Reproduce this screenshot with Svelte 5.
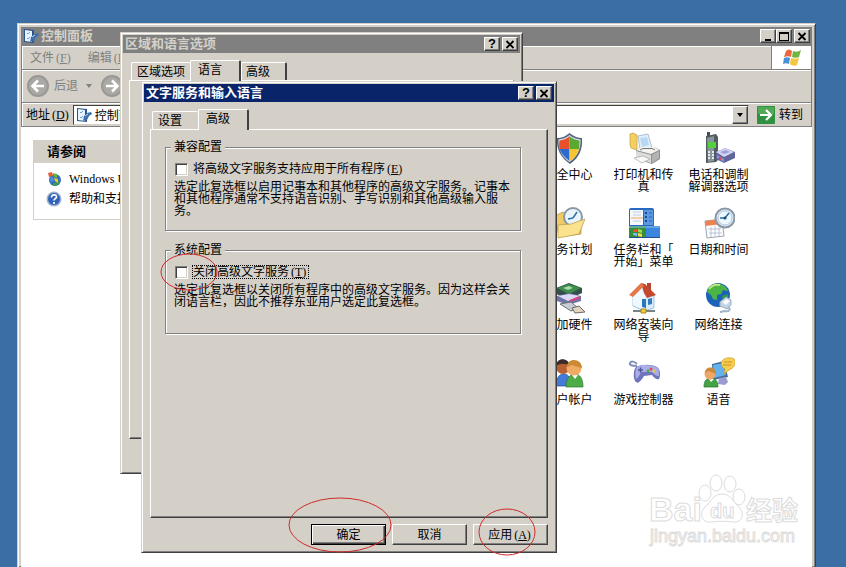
<script>
  const applets = [
    { icon: 'shield', label: '安全中心' },
    { icon: 'printer', label: '打印机和传真' },
    { icon: 'phone', label: '电话和调制解调器选项' },
    { icon: 'tasks', label: '任务计划' },
    // the opening bracket stays on the first line, so the break is explicit
    { icon: 'taskbar', label: '任务栏和「\n开始」菜单' },
    { icon: 'date', label: '日期和时间' },
    { icon: 'hardware', label: '添加硬件' },
    { icon: 'house', label: '网络安装向导' },
    { icon: 'globe', label: '网络连接' },
    { icon: 'users', label: '用户帐户' },
    { icon: 'gamepad', label: '游戏控制器' },
    { icon: 'speech', label: '语音' }
  ];

  let address = $state('控制面板');
  let allPrograms = $state(false);
  let turnOff = $state(false);
</script>

{#snippet panelIcon()}
  <svg class="ico16" viewBox="0 0 16 16" aria-hidden="true">
    <path d="M1 1l10 1v13L1 14z" fill="#2a5690" />
    <path d="M2 2l7 1v11l-7-1z" fill="#e8f3fc" />
    <path d="M4 5l1 1 2-2M4 10l1 1 2-2" stroke="#6fa3d8" fill="none" />
    <path d="M8 9l3-3 4-1 1 2-3 2-2 4-4 1z" fill="#3c6fae" />
    <path d="M9 9l3-2" stroke="#b7d4ee" />
  </svg>
{/snippet}

{#snippet closeGlyph()}
  <svg width="10" height="9" viewBox="0 0 10 9" aria-hidden="true"><path d="M1.5 1l7 7M8.5 1l-7 7" stroke="#000" stroke-width="1.8" /></svg>
{/snippet}

{#snippet accel(key)}<span class="accel">(<u>{key}</u>)</span>{/snippet}

{#snippet appletIcon(name)}
  <svg class="ico32" viewBox="0 0 32 32" aria-hidden="true">
    {#if name === 'shield'}
      <path d="M16.500 1C20 4 25 6 29 6c1 11-3 20-12 26C8 26 3 17 4 6c5 0 9-2 12.500-5z" fill="#56657c" />
      <path d="M16.500 3C20 6 24 7 27.500 7.500 28 17 24 25 16.500 30 9 25 5 17 5.500 7.500 9 7 13 6 16.500 3z" fill="#dce5ee" />
      <path d="M16.500 4v13H6.500C6 14 6 11 6.500 8.500 10 8 13.500 7 16.500 4z" fill="#e8502a" />
      <path d="M16.500 4c3 3 6.500 4 10 4.500 0 3 0 5.500-.5 8.500h-9.500z" fill="#58a832" />
      <path d="M6.500 17h10v12C11 25 8 21 6.500 17z" fill="#2b6ad0" />
      <path d="M16.500 17H26c-1 4-4 9-9.500 12z" fill="#f6c631" />
    {:else if name === 'printer'}
      <path d="M2 2l3-1 4 2v15l-6-2-1-3z" fill="#f4cf62" stroke="#c69a36" stroke-width=".7" />
      <path d="M10 4l10-2 4 14-12 2z" fill="#e3f0fb" stroke="#8fa9c4" stroke-width=".7" />
      <path d="M12 6l7-1 2 8-7 2z" fill="#b9d8f4" />
      <path d="M8 18l5-3h13l6 3v9l-8 5-16-5z" fill="#8f9293" />
      <path d="M8 18l5-3h13l5 3-8 4z" fill="#f3f3ef" />
      <path d="M8 19l15 4v8L8 26z" fill="#dcdcd8" />
      <path d="M24 23l7-4v7l-7 5z" fill="#b4b5b2" />
      <path d="M6 26l9-2 7 3-8 4z" fill="#f9f9f7" stroke="#a4a6a4" stroke-width=".7" />
      <path d="M12 18l3-1.500h9l3 1.500" fill="none" stroke="#777" />
    {:else if name === 'phone'}
      <path d="M4 0h3v7H4z" fill="#444b52" />
      <path d="M3 4l10-2 2 3v23l-2 2-10 1z" fill="#525b62" />
      <path d="M4 6l7-2v25l-6 1z" fill="#87959d" />
      <path d="M5 10h8v6H5z" fill="#54d03c" />
      <path d="M5 19h2v2H5zM9 19h2v2H9zM5 22h2v2H5zM9 22h2v2H9zM5 25h2v2H5zM9 25h2v2H9z" fill="#e6edf0" />
      <path d="M13 20l9-4 10 4v6l-11 5-8-4z" fill="#60659c" />
      <path d="M13 20l9-4 9 4-10 5z" fill="#d3d5f1" />
      <path d="M17 20l6-2 4 2-6 2z" fill="#9ba1dc" />
      <path d="M14 23l7 4v3l-7-4z" fill="#8d92cf" />
      <path d="M16 26l2 1" stroke="#e33" stroke-width="2" />
    {:else if name === 'tasks'}
      <path d="M2 9l8-4 5 2 13-2v22L6 30z" fill="#f0cb65" stroke="#b08d38" stroke-width=".7" />
      <circle cx="20" cy="10" r="9" fill="#eaf4fb" stroke="#8799a8" stroke-width="2" />
      <path d="M20 11l4-6M20 11l-5 1" stroke="#2e6daa" stroke-width="1.500" />
      <path d="M5 18l13-1 14-5-6 15L5 31z" fill="#fbe28e" stroke="#b99846" stroke-width=".7" />
    {:else if name === 'taskbar'}
      <rect x="1" y="1" width="25" height="20" rx="2" fill="#2768c0" />
      <path d="M2 3h13v15H2z" fill="#f4f8fd" />
      <path d="M16 3h9v15h-9z" fill="#5c98e0" />
      <path d="M5 5h8M5 8h8M5 14h8" stroke="#c3cedb" />
      <path d="M3 11h12" stroke="#f2a455" />
      <path d="M17 6h2M17 10h2M17 14h2" stroke="#194b96" stroke-width="2" />
      <path d="M21 6h3M21 10h3M21 14h3" stroke="#2c66ba" />
      <path d="M1 19h17v12H1z" fill="#338f3a" />
      <path d="M18 19h14v12H18z" fill="#3b85dd" />
      <path d="M1 20h31" stroke="#8bc7f1" />
      <path d="M1 30.500h31" stroke="#205090" />
      <path d="M5 23l4-1v3H5z" fill="#f05030" /><path d="M10 22l4 1v3l-4-1z" fill="#9ade4f" />
      <path d="M5 26h4v3l-4-1z" fill="#76b9ff" /><path d="M10 26l4 1v3l-4-1z" fill="#ffd640" />
    {:else if name === 'date'}
      <path d="M2 14l17-2 2 17-17 2z" fill="#fff" stroke="#9aa1b2" />
      <path d="M2 14l17-2 .5 5-17 2z" fill="#ef8350" />
      <path d="M5 22h13M6 26h13M8 20v10M12 19v10M16 18v11" stroke="#b7c1d5" />
      <circle cx="22" cy="11" r="9.500" fill="#d8eafa" stroke="#8c97a5" stroke-width="2" />
      <circle cx="22" cy="11" r="7" fill="#edf7ff" stroke="#bac9d6" />
      <path d="M22 11l4-5M22 11h-5" stroke="#256dad" stroke-width="1.500" />
      <circle cx="22" cy="11" r="1.500" fill="#246" />
    {:else if name === 'hardware'}
      <path d="M3 6l13-5 13 5v5l-13 6-13-5z" fill="#35504c" />
      <path d="M4 6l12-4 12 4-12 6z" fill="#3c8c4a" />
      <path d="M10 6l6-2 4 2-5 2z" fill="#a9dbaf" />
      <path d="M4 14l12-3 12 3v5l-13 4-11-4z" fill="#6e73a8" />
      <path d="M5 14l11-2 11 2-12 5z" fill="#dcd9f6" />
      <path d="M17 19l10-4" stroke="#d8467a" stroke-width="2" />
      <path d="M7 22l11-2 7 6-7 3z" fill="#c9cbd2" stroke="#6b7077" />
      <path d="M19 26l7-2 6 6-10 1z" fill="#e3d5bf" stroke="#686868" />
    {:else if name === 'house'}
      <path d="M19 1h4v9h-4z" fill="#b14730" />
      <path d="M5 14l9-10 12 9v13l-10 3-11-5z" fill="#d7edfb" stroke="#81b2d5" stroke-width=".7" />
      <path d="M5 14l8-9 5 10-1 13-12-5z" fill="#eef8fe" />
      <path d="M14 17h4v9l-4-1z" fill="#2677bd" />
      <path d="M20 17l4-1v6l-4 1z" fill="#347dc0" />
      <path d="M13 1l4 1 11 11-9 3-3-5z" fill="#c5482c" />
      <path d="M13 1l3 3L5 15l-4-2z" fill="#e57748" />
      <path d="M5 29h22" stroke="#76828c" stroke-width="2" />
      <path d="M13 27h5v4h-5z" fill="#f3ce36" stroke="#a9861d" />
    {:else if name === 'globe'}
      <circle cx="15" cy="13" r="12" fill="#1d62b9" />
      <path d="M4 10C5 4 11 1 16 2c5 0 8 4 9 7l-5-1-2 4-4 1v5l-4-1-2-4z" fill="#4ab545" />
      <path d="M19 14l6-2c1 5-1 9-4 10z" fill="#2e9b48" />
      <path d="M6 7c3-4 6-5 11-4" stroke="#bde878" stroke-width="2" fill="none" />
      <path d="M17 20l6-5 5 3v5l-4 4-7-3z" fill="#c3d4e3" stroke="#9db1c4" />
      <path d="M19 20l5-3 3 2-4 4z" fill="#f7fbff" />
      <path d="M25 25c4 3 0 5-3 4-2 0-3 1-5 1" stroke="#9fb4c8" stroke-width="2" fill="none" />
    {:else if name === 'users'}
      <path d="M3 29c0-8 3-12 8-12s7 5 7 12z" fill="#447bda" stroke="#224f91" stroke-width=".7" />
      <circle cx="10" cy="10" r="7" fill="#b96032" />
      <path d="M3 9C3 0 16 0 17 9c-5-3-9-3-14 0z" fill="#392c29" />
      <path d="M13 30c0-9 4-13 9-13s8 5 8 13z" fill="#4eac47" stroke="#277734" stroke-width=".7" />
      <path d="M19 18l3 4 3-4z" fill="#fff" />
      <circle cx="21" cy="11" r="7.500" fill="#f0ab62" />
      <path d="M14 10C14 0 29 1 29 11c-4-1-7-2-10-3z" fill="#cd8a35" />
    {:else if name === 'gamepad'}
      <path d="M9 9C4 9 1 8 2 6s4-2 7 1" stroke="#8290b9" stroke-width="2" fill="none" />
      <path d="M8 10c6-3 15-3 21 0 3 2 4 8 2 12-2 1-5-1-7-4l-8 1c-3 5-6 8-8 6-3-2-3-12 0-15z" fill="#6f75bd" />
      <path d="M9 10c6-3 14-2 19 0 3 1 3 5 3 9-3 0-5-2-7-4H13c-2 4-3 6-5 7-1-4-1-9 1-12z" fill="#abade7" />
      <path d="M10 13h5M12.500 10.500v5" stroke="#4e579e" stroke-width="1.500" />
      <circle cx="23" cy="12" r="1.500" fill="#d94a4c" /><circle cx="26" cy="14" r="1.500" fill="#e7cc48" /><circle cx="20" cy="14" r="1.500" fill="#4ba454" />
    {:else}
      <path d="M9 7l12-3 4 16-15 3z" fill="#466b9b" />
      <path d="M10 8l10-2 3 12-12 3z" fill="#62b2ee" />
      <path d="M16 21l7-1 2 5-3 3-7-1z" fill="#9a9bcf" />
      <path d="M20 3c3-3 10-3 12 0 1 4-1 8-6 10l-5 4 1-5c-4-2-5-6-2-9z" fill="#f7cf4c" stroke="#c9962c" stroke-width=".7" />
      <path d="M21 5h8M20 8h8" stroke="#c6912f" />
      <path d="M1 30c0-7 3-9 7-9s7 3 7 9z" fill="#44a443" stroke="#267230" stroke-width=".7" />
      <path d="M6 22l2 3 3-3z" fill="#fff" />
      <circle cx="7" cy="17" r="5.500" fill="#eea765" />
      <path d="M2 16c0-8 12-7 11 1-3-1-6-3-8-3z" fill="#c98a3c" />
    {/if}
  </svg>
{/snippet}

<div class="desktop">
  <section class="window explorer" aria-label="控制面板">
    <header class="title">
      {@render panelIcon()}
      <h1>控制面板</h1>
      <button class="cap" aria-label="最小化"><svg width="10" height="9" viewBox="0 0 10 9"><path d="M2 7h6v2H2z" /></svg></button>
      <button class="cap" aria-label="最大化"><svg width="10" height="9" viewBox="0 0 10 9"><path d="M0 0h10v9H0zM1 2v6h8V2z" fill-rule="evenodd" /></svg></button>
      <button class="cap close" aria-label="关闭">{@render closeGlyph()}</button>
    </header>

    <div class="bars">
      <nav class="bar menu">
        <button class="flat">文件{@render accel('F')}</button>
        <button class="flat">编辑{@render accel('E')}</button>
        <div class="flag">
          <svg width="20" height="18" viewBox="0 0 20 18" aria-hidden="true">
            <path d="M4 2c2-2 4-2 6 0L9 8C7 7 5 7 2 8z" fill="#e8663c" />
            <path d="M11 2c3 1 5 1 8-1l-2 7c-2 1-5 1-7 0z" fill="#6fb544" />
            <path d="M2 9c2-1 4-1 6 0l-1 6c-2-1-4-1-6 0z" fill="#4b8fd9" />
            <path d="M9 9c3 1 5 1 8 0l-2 7c-2 1-5 1-7-1z" fill="#f5c540" />
          </svg>
        </div>
      </nav>
      <div class="bar tools">
        <button class="flat back">
          <svg width="24" height="24" viewBox="0 0 24 24" aria-hidden="true">
            <circle cx="12" cy="12" r="11" fill="#999894" /><circle cx="12" cy="12" r="9" fill="#aaa9a5" />
            <path d="M18 12H7M12 6.500L6.500 12l5.500 5.500" stroke="#fff" stroke-width="2.600" fill="none" />
          </svg>
          后退
        </button>
        <span class="drop" aria-hidden="true"></span>
        <button class="flat" aria-label="前进">
          <svg width="24" height="24" viewBox="0 0 24 24" aria-hidden="true">
            <circle cx="12" cy="12" r="11" fill="#999894" /><circle cx="12" cy="12" r="9" fill="#aaa9a5" />
            <path d="M6 12h11M12 6.500l5.500 5.500-5.500 5.500" stroke="#fff" stroke-width="2.600" fill="none" />
          </svg>
        </button>
      </div>
      <div class="bar address">
        <label for="address">地址{@render accel('D')}</label>
        <div class="combo">
          {@render panelIcon()}
          <input id="address" type="text" bind:value={address} />
          <button class="cap arrow" aria-label="展开"><span class="drop"></span></button>
        </div>
        <button class="flat go">
          <svg width="18" height="18" viewBox="0 0 18 18" aria-hidden="true">
            <rect width="18" height="18" rx="1" fill="#2f9140" /><rect x="1" y="1" width="16" height="7" fill="#51a957" />
            <path d="M3 9h11M9 4l5 5-5 5" stroke="#fff" stroke-width="2.200" fill="none" />
          </svg>
          转到
        </button>
      </div>
    </div>

    <div class="content">
      <aside>
        <h2>请参阅</h2>
        <a href="#update">
          <svg class="ico16" viewBox="0 0 16 16" aria-hidden="true">
            <circle cx="9" cy="9" r="6" fill="#2f6fc0" /><path d="M6 14c3-4 5-2 8-5-1 5-4 7-8 5z" fill="#3b9c45" />
            <path d="M2 2l4-1 1 4-4 1z" fill="#e35d33" /><path d="M7 2l4 1v4L8 6z" fill="#64b341" />
            <path d="M3 7l4-1 1 4-3 1z" fill="#4b8ee0" /><path d="M8 7l4 1v4l-3-2z" fill="#f1c43a" />
          </svg>
          Windows Update
        </a>
        <a href="#help">
          <svg class="ico16" viewBox="0 0 16 16" aria-hidden="true">
            <circle cx="8" cy="8" r="7.500" fill="#9db2d2" /><circle cx="8" cy="8" r="6" fill="#2f62b8" />
            <path d="M5.500 6.500c0-4 5.500-3 5-.5C10 8 8 7.500 8 9.500M8 11v2" stroke="#fff" stroke-width="1.700" fill="none" />
          </svg>
          帮助和支持
        </a>
      </aside>
      <ul class="applets">
        {#each applets as item}
          <li>{@render appletIcon(item.icon)}<span>{item.label}</span></li>
        {/each}
      </ul>
    </div>

    <svg class="mark" width="160" height="80" viewBox="0 0 160 80" aria-hidden="true">
      <g fill="#fff" stroke="#dcdcdc" stroke-width="1">
        <text x="2" y="50" font-size="34" font-weight="bold">Bai</text>
        <ellipse cx="58" cy="22" rx="6" ry="8" /><ellipse cx="69" cy="12" rx="6" ry="8" />
        <ellipse cx="83" cy="13" rx="6" ry="8" /><ellipse cx="92" cy="26" rx="6" ry="8" />
        <path d="M75 23c9 0 11 8 17 13 6 6 4 16-6 15-7-1-15-1-22 0-10 1-12-9-6-15 6-5 8-13 17-13z" />
        <text x="63" y="47" font-size="20" font-weight="bold">du</text>
        <text class="cjk" x="99" y="49" font-size="26" font-weight="bold">经验</text>
        <text x="3" y="71" font-size="18">jingyan.baidu.com</text>
      </g>
    </svg>
  </section>

  <section class="window regional" role="dialog" aria-label="区域和语言选项">
    <header class="title">
      <h1>区域和语言选项</h1>
      <button class="cap" aria-label="帮助">?</button>
      <button class="cap close" aria-label="关闭">{@render closeGlyph()}</button>
    </header>
    <div class="tabs" role="tablist">
      <button class="tab" role="tab" aria-selected="false">区域选项</button>
      <button class="tab on" role="tab" aria-selected="true">语言</button>
      <button class="tab" role="tab" aria-selected="false">高级</button>
    </div>
    <div class="sheet"></div>
  </section>

  <section class="window services" role="dialog" aria-label="文字服务和输入语言">
    <header class="title active">
      <h1>文字服务和输入语言</h1>
      <button class="cap" aria-label="帮助">?</button>
      <button class="cap close" aria-label="关闭">{@render closeGlyph()}</button>
    </header>
    <div class="tabs" role="tablist">
      <button class="tab" role="tab" aria-selected="false">设置</button>
      <button class="tab on" role="tab" aria-selected="true">高级</button>
    </div>
    <div class="sheet">
      <fieldset>
        <legend>兼容配置</legend>
        <div class="check">
          <input id="all" type="checkbox" bind:checked={allPrograms} />
          <label for="all">将高级文字服务支持应用于所有程序{@render accel('E')}</label>
        </div>
        <p>选定此复选框以启用记事本和其他程序的高级文字服务。记事本和其他程序通常不支持语音识别、手写识别和其他高级输入服务。</p>
      </fieldset>
      <fieldset>
        <legend>系统配置</legend>
        <div class="check">
          <input id="off" type="checkbox" bind:checked={turnOff} />
          <label for="off" class="focus">关闭高级文字服务{@render accel('T')}</label>
        </div>
        <p>选定此复选框以关闭所有程序中的高级文字服务。因为这样会关闭语言栏，因此不推荐东亚用户选定此复选框。</p>
      </fieldset>
    </div>
    <footer>
      <button class="push default">确定</button>
      <button class="push">取消</button>
      <button class="push">应用{@render accel('A')}</button>
    </footer>
    <!-- hand-drawn rings around the tick box and two of the buttons -->
    <svg class="rings" aria-hidden="true">
      <ellipse cx="47" cy="190" rx="28" ry="18" />
      <ellipse cx="198" cy="443" rx="51" ry="27" />
      <ellipse cx="365" cy="450" rx="28" ry="23" />
    </svg>
  </section>
</div>

<style>
  :global(body) {
    background: #3a6ea5;
  }
  .desktop {
    position: relative;
    box-sizing: border-box;
    min-height: 100vh;
    padding: 23px 30px 0 17px;
    display: flex;
    overflow: hidden;
    background: #3a6ea5;
    color: #000;
    font: 12px/12px 'Liberation Serif', 'Noto Sans CJK SC', sans-serif;
  }
  button,
  input {
    font: inherit;
    color: inherit;
    margin: 0;
    padding: 0;
  }
  h1,
  h2 {
    margin: 0;
    font-size: 13px;
    line-height: 18px;
  }
  .window {
    box-sizing: border-box;
    background: #d4d0c8;
    border: 1px solid;
    border-color: #d4d0c8 #404040 #404040 #d4d0c8;
    box-shadow: inset 1px 1px #fff, inset -1px -1px #808080;
    padding: 2px;
  }
  .explorer {
    position: relative;
    flex: 1;
    display: flex;
    flex-direction: column;
    padding: 3px 3px 0;
    border-bottom: 0;
  }
  .regional {
    position: absolute;
    left: 120px;
    top: 32px;
    width: 403px;
  }
  .services {
    position: absolute;
    left: 141px;
    top: 81px;
    width: 416px;
  }
  .title {
    display: flex;
    align-items: center;
    height: 18px;
    padding: 0 2px;
    background: #808080;
    color: #d4d0c8;
  }
  .title.active {
    background: #0a246a;
    color: #fff;
  }
  .title h1 {
    flex: 1;
  }
  .title .ico16 {
    margin-right: 2px;
  }
  .ico16 {
    width: 16px;
    height: 16px;
    flex: none;
  }
  .cap {
    box-sizing: border-box;
    width: 16px;
    height: 14px;
    display: flex;
    align-items: center;
    justify-content: center;
    background: #d4d0c8;
    border: 1px solid;
    border-color: #fff #404040 #404040 #fff;
    box-shadow: inset -1px -1px #808080;
    color: #000;
    font: bold 13px/12px 'Liberation Sans', sans-serif;
  }
  .cap.close {
    margin-left: 2px;
  }

  /* toolbars */
  .bars {
    border: 1px solid #808080;
  }
  .bar {
    display: flex;
    align-items: center;
    box-shadow: inset 1px 1px #fff;
  }
  .bar + .bar {
    border-top: 1px solid #808080;
  }
  .flat {
    display: flex;
    align-items: center;
    background: none;
    border: 0;
  }
  .accel {
    padding: 0 2px;
  }
  .menu {
    height: 23px;
    padding-left: 8px;
    gap: 15px;
    color: #808080;
  }
  .flag {
    align-self: stretch;
    display: flex;
    align-items: center;
    justify-content: center;
    width: 39px;
    margin-left: auto;
    background: #fff;
    border-left: 1px solid #808080;
  }
  .tools {
    height: 32px;
    padding-left: 4px;
    gap: 8px;
    color: #808080;
  }
  .back {
    gap: 4px;
  }
  .drop {
    border: 3px solid transparent;
    border-top: 4px solid currentColor;
    border-bottom: 0;
  }
  .address {
    height: 23px;
    padding: 0 8px 0 4px;
    gap: 2px;
  }
  .combo {
    flex: 1;
    display: flex;
    align-items: center;
    gap: 3px;
    height: 18px;
    padding-left: 2px;
    background: #fff;
    border: 1px solid;
    border-color: #404040 #d4d0c8 #d4d0c8 #404040;
  }
  .combo input {
    flex: 1;
    min-width: 0;
    border: 0;
    outline: 0;
    background: none;
  }
  .arrow {
    height: 18px;
  }
  .go {
    gap: 4px;
    padding-left: 6px;
  }

  /* folder view */
  .content {
    flex: 1;
    display: flex;
    align-items: flex-start;
    justify-content: space-between;
    padding: 5px 56px 0 12px;
    background: #fff;
  }
  aside {
    width: 190px;
    margin-top: 8px;
    padding-bottom: 10px;
    border: 1px solid #d4d0c8;
  }
  aside h2 {
    margin-bottom: 6px;
    padding: 2px 13px;
    background: #d4d0c8;
  }
  aside a {
    display: flex;
    align-items: center;
    gap: 7px;
    height: 20px;
    padding-left: 12px;
    color: #000;
    text-decoration: none;
  }
  .applets {
    display: grid;
    grid-template-columns: repeat(3, 75px);
    grid-auto-rows: 75px;
    margin: 0;
    padding: 0;
    list-style: none;
  }
  .applets li {
    display: flex;
    flex-direction: column;
    align-items: center;
    gap: 5px;
  }
  .applets span {
    max-width: 60px;
    text-align: center;
    white-space: pre-line;
  }
  .ico32 {
    width: 32px;
    height: 32px;
    flex: none;
  }
  .mark {
    position: absolute;
    right: 8px;
    bottom: 16px;
    font-family: 'Liberation Sans', sans-serif;
  }
  .cjk {
    font-family: 'Noto Sans CJK SC', sans-serif;
  }

  /* dialogs */
  .tabs {
    display: flex;
    align-items: flex-end;
    margin: 7px 8px 0;
  }
  .tab {
    box-sizing: border-box;
    height: 18px;
    padding: 0 15px 0 4px;
    background: #d4d0c8;
    border: 0;
    border-top: 1px solid #fff;
    border-left: 1px solid #fff;
    border-radius: 2px 2px 0 0;
  }
  .tab:last-child {
    border-right: 2px solid #404040;
  }
  .tab:first-child {
    padding: 0 5px;
  }
  .services .tab:first-child {
    padding-right: 16px;
  }
  .tab.on {
    position: relative;
    height: 21px;
    margin-bottom: -1px;
    padding: 0 17px 3px 7px;
    border-right: 2px solid #404040;
  }
  .sheet {
    box-sizing: border-box;
    margin: 0 6px;
    border: 1px solid;
    border-color: #fff #404040 #404040 #fff;
    box-shadow: inset -1px -1px #808080;
  }
  .regional .sheet {
    min-height: 359px;
    margin-bottom: 32px;
  }
  .services .sheet {
    min-height: 389px;
    padding: 11px 26px 0 14px;
  }
  fieldset {
    box-sizing: border-box;
    min-height: 90px;
    margin: 0 0 13px;
    padding: 8px 8px 0;
    border: 1px solid #808080;
    box-shadow: 1px 1px #fff, inset 1px 1px #fff;
  }
  legend {
    margin-left: -3px;
    padding: 0 3px;
    background: #d4d0c8;
  }
  .check {
    display: flex;
    align-items: center;
    gap: 4px;
    height: 16px;
    padding-left: 1px;
  }
  .check input {
    appearance: none;
    box-sizing: border-box;
    width: 13px;
    height: 13px;
    background: #fff;
    border: 1px solid;
    border-color: #808080 #fff #fff #808080;
    box-shadow: inset 1px 1px #404040, inset -1px -1px #d4d0c8;
  }
  .check input:checked {
    background: #000 content-box;
    padding: 2px;
  }
  .check label {
    border: 1px dotted transparent;
  }
  .check label.focus {
    border-color: #000;
  }
  p {
    margin: 4px 0 0;
  }
  footer {
    display: flex;
    justify-content: flex-end;
    gap: 6px;
    padding: 6px 6px 5px;
  }
  .push {
    box-sizing: border-box;
    width: 75px;
    height: 21px;
    background: #d4d0c8;
    border: 1px solid;
    border-color: #fff #404040 #404040 #fff;
    box-shadow: inset -1px -1px #808080;
  }
  .push.default {
    border-color: #000;
    box-shadow: inset 1px 1px #fff, inset -1px -1px #404040, inset -2px -2px #808080;
  }
  .rings {
    position: absolute;
    inset: 0;
    width: 100%;
    height: 100%;
    overflow: visible;
    pointer-events: none;
    fill: none;
    stroke: #cf2b2b;
  }
</style>
